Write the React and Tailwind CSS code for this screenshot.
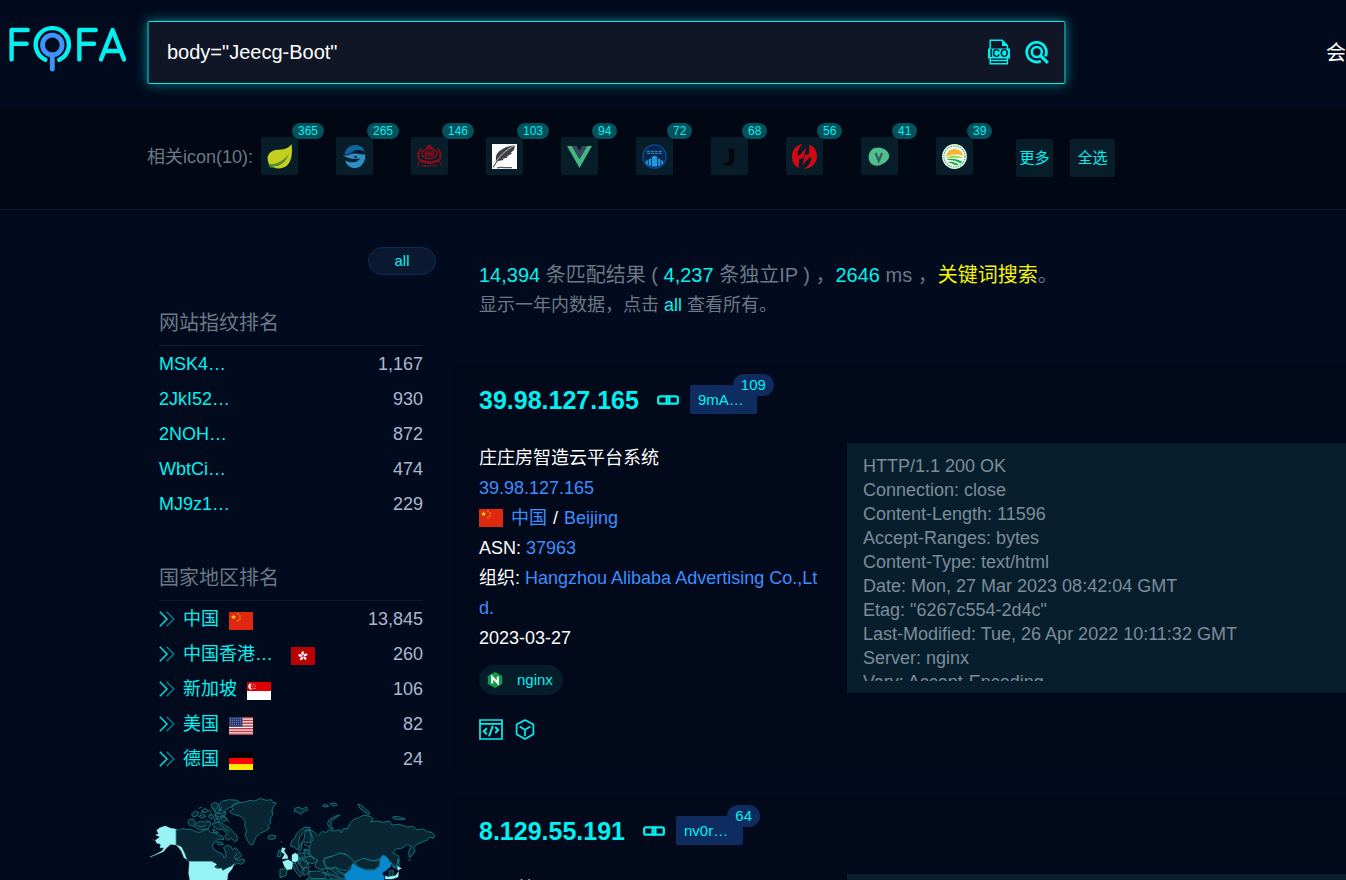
import React from "react";

const CYAN = "#04f0f0";

function Logo() {
  return (
    <svg viewBox="0 0 118 46" className="block h-[46px] w-[118px]" fill="none" strokeLinecap="round" strokeLinejoin="round" strokeWidth="4.4" stroke={CYAN} role="img" aria-label="FOFA">
      <path d="M18.7 4H2.6V33.4M2.6 17.8H17.6" />
      <path d="M36.3 33.8A16.6 16.6 0 1 1 50.3 33.8" />
      <path d="M86.7 4H70.4V33.4M70.4 17.8H85" />
      <path d="M92 33.4L103.6 4L115 33.4M96 25H111.2" />
      <g stroke="#3f93ff" strokeWidth="4.8">
        <circle cx="43.3" cy="19" r="9.8" />
        <path d="M43.3 29V43.2" />
      </g>
    </svg>
  );
}

function IcoFileIcon() {
  return (
    <svg viewBox="0 0 24 26" className="h-[26px] w-6" fill="none" stroke={CYAN} strokeWidth="1.5">
      <path d="M3.2 10V1.2H15.2L20.4 6.6V10M3.2 18V24.8H20.4V18M4 21.4H20" />
      <path d="M15 1V7H20.8Z" fill={CYAN} stroke="none" />
      <path d="M1 9.5H23V19.5H1Z" fill={CYAN} stroke="none" />
      <text x="12" y="18.2" textAnchor="middle" fill="#101626" stroke="none" fontFamily="Liberation Sans, sans-serif" fontWeight="700" fontSize="10.5">ICO</text>
    </svg>
  );
}

function SearchIcon() {
  return (
    <svg viewBox="0 0 24 24" className="h-6 w-6" fill="none" stroke={CYAN} strokeWidth="2.8">
      <path d="M15.8 21A9.8 9.8 0 1 1 20.4 16.4" />
      <circle cx="11.8" cy="12" r="5" strokeWidth="2.6" />
      <path d="M15 15.2L22.8 22.8" strokeWidth="3.2" />
    </svg>
  );
}

function LinkIcon() {
  return (
    <svg viewBox="0 0 22 10" className="h-[10px] w-[22px]" fill="none" stroke={CYAN} strokeWidth="2.3">
      <rect x="1.2" y="1.3" width="11.2" height="7.4" rx="1.8" />
      <rect x="9.6" y="1.3" width="11.2" height="7.4" rx="1.8" />
      <path d="M9.2 5L12.8 5" strokeWidth="1.4" />
    </svg>
  );
}

function CodeIcon() {
  return (
    <svg viewBox="0 0 24 21" className="h-[21px] w-6" fill="none" stroke={CYAN} strokeWidth="1.7">
      <path d="M1 1H23V20H1ZM1 4.8H23" />
      <path d="M7.8 9.2L4.8 12.2L7.8 15.2M16.2 8L19.2 11L16.2 14M13.8 6.8L10 17.4" strokeWidth="2" />
    </svg>
  );
}

function CubeIcon() {
  return (
    <svg viewBox="0 0 20 21" className="h-[21px] w-5" fill="none" stroke={CYAN} strokeWidth="1.7" strokeLinejoin="round">
      <path d="M10 1L18.4 5.6V15.2L10 20L1.6 15.2V5.6Z" />
      <path d="M4.6 7.6L10 10.8L15.4 7.6M10 10.8V17" />
    </svg>
  );
}

function Chevrons() {
  return (
    <svg viewBox="0 0 16 16" className="h-4 w-4 shrink-0" fill="none" strokeWidth="1.5">
      <path d="M0.8 0.8L8 8L0.8 15.2" stroke="#04dede" />
      <path d="M7.6 0.8L14.8 8L7.6 15.2" stroke="#087a86" />
    </svg>
  );
}

function NginxIcon() {
  return (
    <svg viewBox="0 0 16 16" className="h-4 w-4">
      <path d="M8 0L15.2 4V12L8 16L0.8 12V4Z" fill="#119a4b" />
      <path d="M5.2 11.6V4.8L10.8 11.2V4.4" fill="none" stroke="#fff" strokeWidth="2" />
    </svg>
  );
}

const STAR = "M0 -1L0.22 -0.31L0.95 -0.31L0.36 0.12L0.59 0.81L0 0.38L-0.59 0.81L-0.36 0.12L-0.95 -0.31L-0.22 -0.31Z";

function FlagArt({ code }) {
  if (code === "cn")
    return (
      <>
        <path d="M0 0H24V18H0Z" fill="#de2910" />
        <g fill="#ffde00">
          <path d={STAR} transform="translate(4.6 5) scale(2.9)" />
          <path d={STAR} transform="translate(9 2.2) scale(1.1)" />
          <path d={STAR} transform="translate(11 4.2) scale(1.1)" />
          <path d={STAR} transform="translate(11 6.8) scale(1.1)" />
          <path d={STAR} transform="translate(9 8.6) scale(1.1)" />
        </g>
      </>
    );
  if (code === "hk")
    return (
      <>
        <path d="M0 0H24V18H0Z" fill="#ba0000" />
        <g fill="#fff" transform="translate(12 9)">
          {[0, 72, 144, 216, 288].map((a) => (
            <path key={a} d="M0 -0.6C-2.6 -1.8 -2 -4.8 0.6 -5C0 -3.6 2 -2.6 0 -0.6Z" transform={`rotate(${a})`} />
          ))}
        </g>
      </>
    );
  if (code === "sg")
    return (
      <>
        <path d="M0 0H24V9H0Z" fill="#df0000" />
        <path d="M0 9H24V18H0Z" fill="#fff" />
        <path d="M5 1.6A3 3 0 1 0 5 7.4A3.8 3.8 0 0 1 5 1.6Z" fill="#fff" />
        {[[7, 2.2], [5.8, 4], [8.3, 4], [6.2, 6.2], [8, 6.2]].map(([x, y]) => (
          <circle key={`${x}-${y}`} cx={x} cy={y} r="0.5" fill="#fff" />
        ))}
      </>
    );
  if (code === "us")
    return (
      <>
        <path d="M0 0H24V18H0Z" fill="#f3eef0" />
        <path d="M0 0.7H24M0 3.5H24M0 6.2H24M0 9H24M0 11.8H24M0 14.5H24M0 17.3H24" stroke="#bd3d44" strokeWidth="1.38" />
        <path d="M0 0H13.4V9.7H0Z" fill="#293e72" />
        <path d="M1 1.6H13M1 3.6H13M1 5.6H13M1 7.6H13" stroke="#98a3c2" strokeWidth="0.7" strokeDasharray="0.8 1.2" />
      </>
    );
  return (
    <>
      <path d="M0 0H24V6H0Z" fill="#000" />
      <path d="M0 6H24V12H0Z" fill="#f00" />
      <path d="M0 12H24V18H0Z" fill="#ffe600" />
    </>
  );
}

function Flag({ code }) {
  return (
    <svg viewBox="0 0 24 18" preserveAspectRatio="none" className="h-[18px] w-6 shrink-0">
      <FlagArt code={code} />
    </svg>
  );
}

const siteArt = {
  leaf: (
    <>
      <path d="M24.6 0C25.6 9 25 17 19.5 22C14 26 6 25 2 20C-2 12 3 6.5 10 5.8C16 5.8 21 5 24.6 0Z" fill="#c4cf1f" />
      <path d="M1.4 20C9 21 17 17 22 9.5C19.5 17.5 13 23 5.4 22.6Z" fill="#4f8b34" />
      <path d="M1 19L6.5 23.4H3Z" fill="#4f8b34" />
    </>
  ),
  swirl: (
    <>
      <path d="M2.4 10.6C3.6 4.8 7.8 1 13 1C18 1 21.6 3.6 22.8 8C19 5.4 13 5.6 10.6 7.8C8.4 9.6 6 10.8 2.4 10.6Z" fill="#10669c" />
      <path d="M0 11C6 13 8 9.4 12.6 9.4C17 9.4 21 10.8 23.4 10.4C23.6 18.4 19 24 13 24C7.6 24 4.2 20.6 3.2 16.2C7 19 14.6 19.4 18.2 14.4C12 15.6 6 14.6 0 11Z" fill="#2e8fc6" />
      <circle cx="13.6" cy="13" r="1.2" fill="#071f2d" />
    </>
  ),
  emblem: (
    <g fill="none" stroke="#8c0d17">
      <path d="M4.6 18C0 14 0.6 8 4.6 4.6M20.4 18C25 14 24.4 8 20.4 4.6" strokeWidth="2.6" strokeDasharray="2.2 0.6" />
      <ellipse cx="12.5" cy="9.6" rx="7.6" ry="5" strokeWidth="1.6" />
      <path d="M8.4 7.8H11.6V11.6H8.4ZM13.4 7.8H16.6V11.6H13.4ZM8.4 9.7H16.6" strokeWidth="1.2" />
      <path d="M4 16.4C9.5 19.4 15.5 19.4 21 16.4" strokeWidth="2.6" />
      <path d="M9.4 3.8L12.5 1.8L15.6 3.8" strokeWidth="2" />
      <path d="M0 18.6H1.6V21.4H0M25 18.6H23.4V21.4H25" strokeWidth="0.7" />
      <path d="M4.6 21.8H20.4" strokeWidth="1.8" strokeDasharray="1.7 1" />
    </g>
  ),
  feather: (
    <>
      <path d="M0 0H25V25H0Z" fill="#fbfbfc" />
      <path d="M23 1C14 2.4 7 6 4.4 11C3.2 14 4.6 15 3.6 17.4L6 17L11.6 16L10.8 14.8L15.8 13.4L14.8 12.4L20 9.6L18.8 8.6L22 6Z" fill="#3f4045" />
      <path d="M23 1C14 6 6 12.4 1.2 23" fill="none" stroke="#fff" strokeWidth="0.7" />
      <path d="M5.6 16.4L1 23.4" stroke="#333" strokeWidth="1" />
      <path d="M5 24C9 22.6 12 24.2 20 23.6" fill="none" stroke="#555" strokeWidth="1.3" />
    </>
  ),
  vue: (
    <>
      <path d="M0 2H5L12.5 15L20 2H25L12.5 24Z" fill="#41b883" />
      <path d="M5 2H9.6L12.5 7L15.4 2H20L12.5 15Z" fill="#35495e" />
    </>
  ),
  tower: (
    <>
      <circle cx="12.5" cy="12.5" r="11.6" fill="#08264a" stroke="#0c4a9c" strokeWidth="1.4" />
      <path d="M5 7.4H20M5 9.4H20" stroke="#2a7fc0" strokeWidth="1.2" strokeDasharray="3 0.9" />
      <path d="M9.8 22.5V13L12.5 11.4L15.2 13V22.5ZM6.6 21.5V15.4L8.9 14V22ZM16.1 22V14L18.4 15.4V21.5ZM3.8 19.5V17L5.8 16V21ZM19.2 21V16L21.2 17V19.5Z" fill="#2498e0" />
    </>
  ),
  hook: (
    <>
      <path d="M11.4 4.4H17.4V15C17.4 20 14.6 22 10.6 22C8 22 6 21 6.4 18.4C9 19.4 12 19 12 15.4V8.4Z" fill="#04080c" />
      <path d="M1 0V24M1 24H22" stroke="#0b1a22" strokeWidth="0.8" />
    </>
  ),
  knot: (
    <g fill="#cf0a12">
      <path d="M10.6 0C4 1 0 6 0 12.4C0 18.4 2.6 22 6.6 24L7.4 14.8L11.6 14.2L14.2 3.4L7.8 11.2L5.4 11.2C5.6 6.4 7.6 3 10.6 0Z" />
      <path d="M11.6 25C20 24.6 25 19 25 12.6C25 6.4 22 2.4 17.4 0.4L17 10.2L13 10.8L10.2 21.6L17 13.8L19.4 13.8C19 18.6 16.4 22.4 11.6 25Z" />
    </g>
  ),
  vblob: (
    <>
      <path d="M4 6.4C7 3 12 3 16 4.6C20 6.4 22.4 9.6 22.2 12.6C22 17 15 21.6 10 21.8C4.6 21.8 1.8 17.8 1.6 13.6C1.6 10.6 2.4 8 4 6.4Z" fill="#4fc08d" />
      <path d="M8.6 9L11.8 17L15 9" fill="none" stroke="#35615a" strokeWidth="2.2" />
    </>
  ),
  sunrise: (
    <>
      <circle cx="12.5" cy="12.5" r="12.4" fill="#eef8ee" />
      <circle cx="12.5" cy="12.5" r="10.6" fill="none" stroke="#3bb26a" strokeWidth="1.1" strokeDasharray="1.4 1" />
      <path d="M3.8 13A8.8 8.8 0 0 1 21.2 12C16 10 8 10 3.8 13Z" fill="#f8b62c" />
      <path d="M3.8 14C9 10.6 16 11.6 21.2 14C16 13.6 10 13.6 3.8 14Z" fill="#9fcf3a" />
      <path d="M4.4 16C9 13.4 15 15.4 20.4 17.6L18.6 19.6C14 16.6 9 15.6 4.4 16ZM5.4 18.4C10 16.8 14 18.8 17 20.6L14 21.6C11 19.6 8 18.6 5.4 18.4Z" fill="#1fa856" />
    </>
  ),
};

const siteIcons = [
  ["leaf", 365],
  ["swirl", 265],
  ["emblem", 146],
  ["feather", 103],
  ["vue", 94],
  ["tower", 72],
  ["hook", 68],
  ["knot", 56],
  ["vblob", 41],
  ["sunrise", 39],
];

const fingerprints = [
  ["MSK4…", "1,167"],
  ["2JkI52…", "930"],
  ["2NOH…", "872"],
  ["WbtCi…", "474"],
  ["MJ9z1…", "229"],
];

const countries = [
  ["中国", "cn", "13,845"],
  ["中国香港…", "hk", "260"],
  ["新加坡", "sg", "106"],
  ["美国", "us", "82"],
  ["德国", "de", "24"],
];

function WorldMap() {
  return (
    <svg viewBox="24 54 867 300" className="block h-[100px] w-[289px]" fill="#0a2533" stroke="#0f8088" strokeWidth="2.6" strokeLinejoin="round" role="img" aria-label="世界地图">
      {/* Canada and the Arctic islands */}
      <path d="M108 150L118 154L128 148L142 152L152 150L166 158L180 160L192 154L204 150L212 160L226 162L236 168L248 172L252 182L236 180L226 186L217 200L222 212L236 220L248 226L252 238L258 234L256 216L250 206L262 198L272 202L278 212L288 206L296 218L306 230L300 236L286 240L296 244L312 240L313 250L302 256L292 252L284 258L274 264L262 268L250 274L240 270L228 262L216 248H146L136 238L130 218L118 204L108 198Z" />
      <path d="M148 122L160 120L166 130L160 142L148 138L144 128ZM168 134L182 126L196 130L210 126L212 138L204 150L186 152L172 150L164 144ZM154 106L166 96L176 100L172 110L160 114ZM176 112L190 106L198 112L186 118ZM184 96L196 88L206 96L196 102ZM204 112L216 106L222 116L212 120ZM222 122L234 116L240 128L228 134Z" />
      <path d="M214 76L226 70L236 76L230 88L242 94L236 104L224 98L216 88ZM236 76L248 66L268 62L292 64L298 70L282 76L272 84L258 92L250 100L240 90ZM226 102L246 104L258 98L256 108L238 114L226 110Z" />
      <path d="M216 134L232 130L246 132L256 140L268 146L280 160L290 168L292 184L284 188L274 178L262 184L254 172L262 164L248 152L232 150L222 144ZM240 118L254 112L262 122L250 128ZM218 150L230 156L236 162L222 160ZM230 188L246 190L250 196L236 198Z" />
      <path d="M196 120L204 128M176 88L186 84M208 92L214 102M244 108L256 116L268 130M240 136L254 150L268 158M282 238L292 222M218 84L228 96M222 106L234 124M246 84L236 98M172 140L186 144L198 138M180 104L192 98M206 104L214 108" fill="none" />
      {/* Greenland and Iceland */}
      <path d="M268 98L280 90L274 84L292 72L312 70L330 64L344 66L362 58L378 64L394 62L398 70L410 72L400 82L396 94L398 108L390 120L392 132L384 140L388 148L376 156L362 162L350 172L344 184L338 198L330 196L322 184L316 168L320 154L314 142L316 128L308 116L296 110L280 106Z" />
      <path d="M384 172L394 168L406 170L406 178L394 182L384 178Z" />
      {/* Arctic Ocean islands */}
      <path d="M464 88L476 84L488 90L500 84L502 94L490 98L484 106L474 100L464 98ZM548 80L558 76L566 82L554 84ZM570 74L586 72L592 78L578 82ZM654 76L664 78L674 88L690 102L686 106L672 98L660 88ZM758 114L772 112L784 116L796 120L780 122L762 120ZM600 108L584 112L568 122L562 134L568 146L580 150L572 138L574 126L588 116Z" />
      {/* Russia */}
      <path d="M508 152L522 158L534 170L546 158L560 160L566 152L586 156L600 152L604 162L610 148L622 150L630 134L640 122L656 116L672 108L690 112L700 120L692 128L712 126L730 130L748 126L756 138L778 136L802 144L820 142L830 152L850 150L862 158L876 160L884 170L880 178L868 174L862 184L848 188L834 194L826 200L820 208L826 214L818 228L808 236L806 218L814 202L802 196L792 204L784 208L768 210L758 222L776 230L778 246L770 260L760 262L754 250L742 240L730 228L720 238L700 246L670 238L644 250L620 226L600 222L584 230L556 236L550 248L560 268L540 272L524 262L532 244L514 232L506 216L510 196L520 180Z" />
      {/* Europe */}
      <path d="M452 202L454 186L464 178L470 164L482 152L496 144L510 146L508 154L498 152L490 160L480 172L476 190L478 204L470 212L464 204ZM478 204L474 212L480 216L486 204L484 192L492 180L496 156L508 152L514 172L512 188L498 192L492 188ZM474 222L492 222L496 234L482 238L472 232ZM494 210L508 214L504 226L492 220ZM496 234L514 232L534 244L520 254L500 250ZM474 240L492 240L506 254L492 268L476 256ZM454 252L468 254L474 270L486 284L480 294L466 276ZM420 270H442L438 290L420 296ZM486 270L504 264L508 280L492 290ZM506 278L530 276L560 282L556 298L520 300L506 292ZM416 214L424 216L422 232L412 234Z" />
      <path d="M492 196L508 204M486 238L496 252M504 226L524 240M500 250L512 266M480 262L494 276M488 212L502 216M476 234L484 250M544 270L562 286M470 246L484 256M504 296L496 320M548 282L570 292" fill="none" />
      {/* Central Asia */}
      <path d="M552 240L576 232L600 222L622 228L644 250L632 262L620 276L600 272L586 264L574 272L556 262ZM560 268L586 266L604 280L618 284L612 300L580 304L566 290ZM644 250L668 238L700 246L722 244L718 260L704 272L676 272L652 262Z" />
      <path d="M576 272L596 290M590 276L618 292M566 284L604 298M500 300H620L640 320L660 354H520Z" />
      <path d="M758 264L770 262L774 240L778 262L770 270ZM748 276L760 274L758 294L748 292Z" />
      {/* Highlighted countries */}
      <g fill="#98f3f6" stroke="#98f3f6" strokeWidth="1.2">
        <path d="M107 150L92 148L76 141L60 146L50 154L56 164L47 168L60 174L46 184L50 192L62 196L60 206L72 206L66 216L44 228L30 234L70 218L80 206L92 196L107 198ZM110 198L124 204L132 220L140 240L132 236L124 216Z" />
        <path d="M148 248H216L230 256L222 264L234 270L244 268L248 276L262 268L276 262L282 254L276 270L264 284L262 300L252 326L236 336L180 334L152 316L146 284Z" />
        <path d="M426 206L436 208L432 216L442 230L444 238L426 240L434 226L424 218ZM456 228L466 222L474 228L474 244L466 250L456 246ZM428 248L444 242L458 250L456 270L442 272L434 264Z" />
        <path d="M772 262L784 268L774 274ZM776 278L774 294L756 300L736 300L736 290L744 294L766 290ZM422 188L426 190M812 240L806 246M38 182L42 184" />
      </g>
      <path d="M614 286L630 272L640 252L652 264L676 274L704 274L720 260L720 240L730 228L744 238L748 250L756 252L750 264L736 276L726 282L734 296L726 320L700 340L650 330L618 306Z" fill="#0788cc" stroke="#0788cc" strokeWidth="1" />
      <path d="M460 330L440 310L420 318L416 354H520L508 320L486 312Z" />
    </svg>
  );
}

function RankSection({ title, children }) {
  return (
    <section>
      <h2 className="border-b border-[#08202b] pb-2 text-xl leading-7 font-normal text-[#6b7885]">{title}</h2>
      <ul className="text-lg">{children}</ul>
    </section>
  );
}

function ResultHeading({ ip, tag, count }) {
  return (
    <div className="flex items-center">
      <h3 className="text-[25px] leading-7 font-bold">
        <a href="#host">{ip}</a>
      </h3>
      <a href="#open" aria-label="打开链接" className="mr-[11px] ml-[18px]">
        <LinkIcon />
      </a>
      <a href="#icon" className="relative w-[67px] rounded-xs bg-[#0e2c5f] px-2 text-[15px] leading-[29px]">
        {tag}
        <span className="absolute -top-[11px] -right-[17px] rounded-full bg-[#0e2c5f] px-2 leading-[22px]">{count}</span>
      </a>
    </div>
  );
}

const headers = `HTTP/1.1 200 OK
Connection: close
Content-Length: 11596
Accept-Ranges: bytes
Content-Type: text/html
Date: Mon, 27 Mar 2023 08:42:04 GMT
Etag: "6267c554-2d4c"
Last-Modified: Tue, 26 Apr 2022 10:11:32 GMT
Server: nginx
Vary: Accept-Encoding`;

function HeaderPanel({ text }) {
  return (
    <div className="h-[250px] min-w-0 flex-1 bg-[#071f2d] px-4 pt-[11px] pb-3 text-[#7d8c99]">
      <pre className="h-full overflow-hidden font-[inherit] text-lg leading-6">{text}</pre>
    </div>
  );
}

export default function App() {
  return (
    <div className="h-screen overflow-x-hidden overflow-y-auto bg-[#020b1d] font-['Liberation_Sans','Noto_Sans_CJK_SC',sans-serif] text-[#04f0f0] [scrollbar-width:none]">
      <header className="flex h-[109px] items-start pl-[9px]">
        <a href="#home" className="mt-[26px] mr-5 shrink-0">
          <Logo />
        </a>
        <form className="mt-[21px] flex h-[63px] w-full max-w-[919px] items-center rounded-xs border border-x-2 border-y-[#04e6e8] border-x-[#078089] bg-[#101626] pr-[15px] pb-0.5 pl-[18px] shadow-[0_0_12px_#067b88]">
          <input aria-label="搜索" defaultValue={'body="Jeecg-Boot"'} className="min-w-0 flex-1 bg-transparent text-xl text-white outline-none" />
          <button type="button" aria-label="icon 搜索" className="mr-[14px]">
            <IcoFileIcon />
          </button>
          <button type="button" aria-label="查询">
            <SearchIcon />
          </button>
        </form>
        <nav className="mt-[39px] ml-auto shrink-0 text-xl leading-7 text-white">
          <a href="#member">会</a>
        </nav>
      </header>

      <div className="flex h-[101px] items-start border-b border-[#0e1a2b] bg-[#010713] pt-7 pl-[147px]">
        <span className="w-[114px] shrink-0 text-lg leading-10 text-[#6b7885]">相关icon(10):</span>
        <div className="flex shrink-0 gap-[38px]">
          {siteIcons.map(([name, count]) => (
            <button key={name} type="button" aria-label={`icon ${name}`} className="relative flex h-[38px] w-[37px] items-center justify-center rounded-xs bg-[#071d2a]">
              <svg viewBox="0 0 25 25" className="h-[25px] w-[25px]">
                {siteArt[name]}
              </svg>
              <span className="absolute -top-3.5 left-[31px] rounded-full bg-[#05525c] px-1.5 text-xs leading-4">{count}</span>
            </button>
          ))}
        </div>
        <div className="mt-0.5 ml-[43px] flex shrink-0 gap-[17px] text-[15px] leading-[38px]">
          <button type="button" className="w-[37px] rounded-xs bg-[#071d2a]">更多</button>
          <button type="button" className="w-[45px] rounded-xs bg-[#071d2a]">全选</button>
        </div>
      </div>

      <main className="flex">
        <aside className="w-[453px] shrink-0 pt-[37px] pr-[30px] pl-[159px]">
          <div className="-mr-[13px] mb-[34px] flex justify-end">
            <button type="button" className="h-7 w-[68px] rounded-full border border-[#0d2a58] bg-[#0a1830] text-[15px] leading-[26px]">all</button>
          </div>
          <div className="space-y-[43px]">
            <RankSection title="网站指纹排名">
              {fingerprints.map(([name, n]) => (
                <li key={name} className="flex h-[35px] items-center justify-between">
                  <a href="#fid">{name}</a>
                  <span className="text-[#aab7d0]">{n}</span>
                </li>
              ))}
            </RankSection>
            <RankSection title="国家地区排名">
              {countries.map(([name, code, n]) => (
                <li key={code} className="flex h-[35px] items-center">
                  <Chevrons />
                  <a href="#country" className="ml-2 flex items-center gap-2.5">
                    <span className={name.endsWith("…") ? "pr-2" : ""}>{name}</span>
                    <span className="pt-1">
                      <Flag code={code} />
                    </span>
                  </a>
                  <span className="ml-auto text-[#aab7d0]">{n}</span>
                </li>
              ))}
            </RankSection>
          </div>
          <div className="-mr-4 -ml-[11px] pt-[21px]">
            <WorldMap />
          </div>
        </aside>

        <div className="min-w-0 flex-1 pt-[50px]">
          <div className="mb-[45px] pl-[26px] text-[#6b7885]">
            <p className="text-xl leading-[30px]">
              <b className="font-normal text-[#04f0f0]">14,394</b> 条匹配结果 ( <b className="font-normal text-[#04f0f0]">4,237</b> 条独立IP ) ，<b className="font-normal text-[#04f0f0]">2646</b> ms ，
              <a href="#keyword" className="text-[#f6f600]">关键词搜索</a>。
            </p>
            <p className="text-lg leading-[30px]">
              显示一年内数据，点击 <a href="#all" className="text-[#04f0f0]">all</a> 查看所有。
            </p>
          </div>

          <div className="space-y-7">
            <article className="bg-[#01091a] pt-5 pb-7 pl-[26px]">
              <ResultHeading ip="39.98.127.165" tag="9mA…" count="109" />
              <div className="mt-[29px] flex items-start gap-6">
                <div className="w-[344px] shrink-0">
                  <div className="text-lg leading-[30px] break-all text-white">
                    <p>庄庄房智造云平台系统</p>
                    <p>
                      <a href="#ip" className="text-[#3d8eff]">39.98.127.165</a>
                    </p>
                    <p className="flex items-center">
                      <Flag code="cn" />
                      <a href="#cn" className="ml-2 text-[#3d8eff]">中国</a>
                      <span className="mx-1.5">/</span>
                      <a href="#beijing" className="text-[#3d8eff]">Beijing</a>
                    </p>
                    <p>
                      ASN: <a href="#asn" className="text-[#3d8eff]">37963</a>
                    </p>
                    <p>
                      组织: <a href="#org" className="text-[#3d8eff]">Hangzhou Alibaba Advertising Co.,Ltd.</a>
                    </p>
                    <p>2023-03-27</p>
                  </div>
                  <a href="#nginx" className="mt-3 flex h-[30px] w-fit items-center gap-[14px] rounded-full bg-[#051c2a] pr-2.5 pl-2 text-[15px]">
                    <NginxIcon />
                    nginx
                  </a>
                  <div className="mt-6 flex items-center gap-3">
                    <button type="button" aria-label="源码">
                      <CodeIcon />
                    </button>
                    <button type="button" aria-label="聚合">
                      <CubeIcon />
                    </button>
                  </div>
                </div>
                <HeaderPanel text={headers} />
              </div>
            </article>

            <article className="bg-[#01091a] pt-5 pl-[26px]">
              <ResultHeading ip="8.129.55.191" tag="nv0r…" count="64" />
              <div className="mt-[29px] flex items-start gap-6">
                <p className="w-[344px] shrink-0 text-lg leading-[30px] text-white">MES管理</p>
                <HeaderPanel text="HTTP/1.1 200 OK" />
              </div>
            </article>
          </div>
        </div>
      </main>
    </div>
  );
}
